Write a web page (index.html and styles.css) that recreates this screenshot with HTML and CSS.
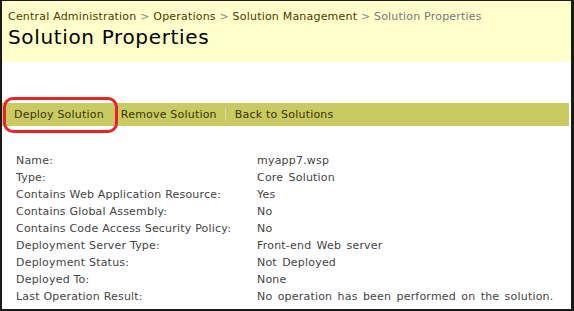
FILE: index.html
```html
<!DOCTYPE html>
<html lang="en">
<head>
    <meta charset="UTF-8">
    <title>Solution Properties</title>
    <link rel="stylesheet" href="styles.css">
</head>
<body>
    <div class="frame">
        <!-- Title area -->
        <div class="title-area">
            <div class="breadcrumb">
                <a href="#">Central Administration</a>
                <span class="sep">&gt;</span>
                <a href="#">Operations</a>
                <span class="sep">&gt;</span>
                <a href="#">Solution Management</a>
                <span class="sep">&gt;</span>
                <span class="current">Solution Properties</span>
            </div>
            <h1>Solution Properties</h1>
        </div>

        <!-- Toolbar -->
        <div class="toolbar">
            <a href="#" class="tool highlight">Deploy Solution</a>
            <a href="#" class="tool">Remove Solution</a>
            <span class="divider"></span>
            <a href="#" class="tool">Back to Solutions</a>
        </div>

        <!-- Properties -->
        <div class="props">
            <div class="label">Name:</div><div class="value">myapp7.wsp</div>
            <div class="label">Type:</div><div class="value">Core Solution</div>
            <div class="label">Contains Web Application Resource:</div><div class="value">Yes</div>
            <div class="label">Contains Global Assembly:</div><div class="value">No</div>
            <div class="label">Contains Code Access Security Policy:</div><div class="value">No</div>
            <div class="label">Deployment Server Type:</div><div class="value">Front-end Web server</div>
            <div class="label">Deployment Status:</div><div class="value">Not Deployed</div>
            <div class="label">Deployed To:</div><div class="value">None</div>
            <div class="label">Last Operation Result:</div><div class="value">No operation has been performed on the solution.</div>
        </div>
    </div>
</body>
</html>
```

FILE: styles.css
```css
body {
    margin: 0;
    font-family: "DejaVu Sans", Verdana, sans-serif;
    font-size: 11px;
    letter-spacing: 0.2px;
    background: #fff;
}
.frame {
    width: 574px;
    height: 311px;
    box-sizing: border-box;
    border: 1px solid #1a1a1a;
    border-width: 1px 3px 2px 2px;
    overflow: hidden;
}
.title-area {
    background: #ffffcc;
    height: 61px;
    padding: 8px 0 0 6px;
    box-sizing: border-box;
}
.breadcrumb {
    color: #777;
    line-height: 15px;
    white-space: nowrap;
}
.breadcrumb a {
    color: #4a3a00;
    text-decoration: none;
}
.breadcrumb .sep {
    color: #888;
}
.title-area h1 {
    margin: 0;
    font-weight: normal;
    font-size: 20px;
    letter-spacing: 0.65px;
    line-height: 27px;
    color: #000;
}
.toolbar {
    margin: 41px 2px 0 0;
    height: 23px;
    background: #caca62;
    display: flex;
    align-items: center;
    padding-left: 12px;
    white-space: nowrap;
}
.tool {
    color: #3a3300;
    text-decoration: none;
    margin-right: 17px;
}
.highlight {
    position: relative;
}
.highlight::after {
    content: "";
    position: absolute;
    left: -11px;
    right: -14px;
    top: -11px;
    bottom: -12px;
    border: 3px solid #e8212b;
    border-radius: 10px;
}
.divider {
    width: 1px;
    height: 13px;
    background: #e3dc8e;
    margin: 0 9px 0 -9px;
}
.props {
    display: grid;
    grid-template-columns: 241px 1fr;
    padding: 26px 0 0 14px;
    color: #444;
    line-height: 17px;
    white-space: nowrap;
}
.props .value {
    word-spacing: 1.6px;
}
```
